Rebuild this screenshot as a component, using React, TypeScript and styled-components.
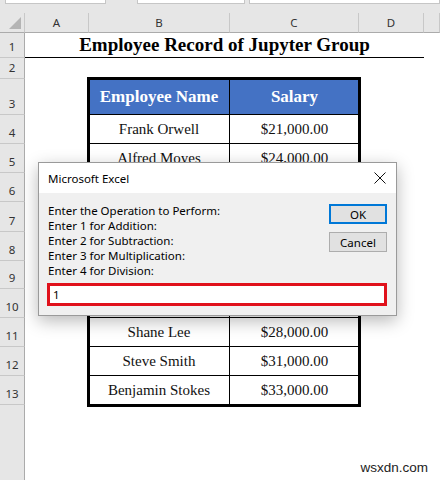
import React from "react";
import styled, { createGlobalStyle } from "styled-components";

const GlobalStyle = createGlobalStyle`
  html, body {
    margin: 0;
    padding: 0;
    background: #ffffff;
  }
  * {
    box-sizing: border-box;
  }
`;

const ROW_HEIGHTS = [25, 21, 36, 29, 29, 29, 30, 29, 28, 29, 29, 29, 29];
const COLUMNS = ["A", "B", "C", "D", ""];

// rows 6-10 sit under the dialog, so they are left blank
const EMPLOYEES = [
  { name: "Frank Orwell", salary: "$21,000.00" },
  { name: "Alfred Moyes", salary: "$24,000.00" },
  { name: "", salary: "" },
  { name: "", salary: "" },
  { name: "", salary: "" },
  { name: "", salary: "" },
  { name: "", salary: "" },
  { name: "Shane Lee", salary: "$28,000.00" },
  { name: "Steve Smith", salary: "$31,000.00" },
  { name: "Benjamin Stokes", salary: "$33,000.00" },
];

const Screen = styled.div`
  position: relative;
  width: 440px;
  height: 480px;
  overflow: hidden;
  background: #ffffff;
  display: flex;
  flex-direction: column;
`;

const FormulaStrip = styled.div`
  height: 13px;
  flex: none;
  background: #e6e6e6;
  display: flex;
  align-items: flex-start;
`;

const FormulaBox = styled.div<{ $left: number; $width: number }>`
  margin-left: ${(p) => p.$left}px;
  width: ${(p) => p.$width}px;
  height: 4px;
  background: #ffffff;
  border: 1px solid #c6c6c6;
  border-top: none;
`;

const Sheet = styled.div`
  flex: 1;
  display: grid;
  grid-template-columns: 25px 64px 141px 129px 65px 1fr;
  grid-template-rows: 20px ${ROW_HEIGHTS.map((h) => `${h}px`).join(" ")} 1fr;
`;

const Corner = styled.div`
  grid-row: 1;
  grid-column: 1;
  background: #e6e6e6;
  border-right: 1px solid #c8c8c8;
  border-bottom: 1px solid #ababab;
  display: flex;
  align-items: flex-end;
  justify-content: flex-end;
  padding: 0 3px 3px 0;
`;

const ColumnHeader = styled.div<{ $col: number }>`
  grid-row: 1;
  grid-column: ${(p) => p.$col};
  background: #e6e6e6;
  border-right: 1px solid #c8c8c8;
  border-bottom: 1px solid #ababab;
  display: flex;
  align-items: center;
  justify-content: center;
  font-family: "Noto Sans", "Open Sans", sans-serif;
  font-size: 11.5px;
  color: #333333;
`;

const RowHeader = styled.div<{ $row: number }>`
  grid-row: ${(p) => p.$row};
  grid-column: 1;
  background: #e6e6e6;
  border-right: 1px solid #ababab;
  border-bottom: 1px solid #c8c8c8;
  display: flex;
  align-items: flex-end;
  justify-content: center;
  padding-bottom: 3px;
  font-family: "Noto Sans", "Open Sans", sans-serif;
  font-size: 11.5px;
  line-height: 14px;
  color: #333333;
`;

const FillerHeader = styled.div<{ $row: number }>`
  grid-row: ${(p) => p.$row};
  grid-column: 1;
  background: #e6e6e6;
  border-right: 1px solid #ababab;
`;

const Title = styled.div`
  grid-row: 2;
  grid-column: 2 / 6;
  border-bottom: 1.5px solid #000000;
  display: flex;
  align-items: flex-end;
  justify-content: center;
  padding-bottom: 1px;
  font-family: "Liberation Serif", "Times New Roman", serif;
  font-weight: bold;
  font-size: 19px;
  line-height: 22px;
  color: #000000;
`;

const Table = styled.div`
  grid-row: 4 / ${4 + ROW_HEIGHTS.length - 2};
  grid-column: 3 / 5;
  display: grid;
  grid-template-columns: 141px 129px;
  grid-template-rows: ${ROW_HEIGHTS.slice(2).map((h) => `${h}px`).join(" ")};
  outline: 3px solid #000000;
  outline-offset: -1px;
`;

const HeadCell = styled.div`
  background: #4472c4;
  color: #ffffff;
  display: flex;
  align-items: center;
  justify-content: center;
  font-family: "Liberation Serif", "Times New Roman", serif;
  font-weight: bold;
  font-size: 17px;
  border-bottom: 1px solid #000000;
  &:first-child {
    border-right: 1px solid #000000;
  }
`;

const Cell = styled.div<{ $first: boolean }>`
  display: flex;
  align-items: center;
  justify-content: center;
  font-family: "Liberation Serif", "Times New Roman", serif;
  font-size: 15px;
  color: #111111;
  border-bottom: 1px solid #000000;
  border-right: ${(p) => (p.$first ? "1px solid #000000" : "none")};
`;

const Dialog = styled.div`
  position: absolute;
  left: 38px;
  top: 162px;
  width: 359px;
  height: 154px;
  border: 1px solid #9a9a9a;
  background: #f0f0f0;
  box-shadow: 0 5px 16px rgba(0, 0, 0, 0.28);
  display: flex;
  flex-direction: column;
  font-family: "Noto Sans", "Open Sans", sans-serif;
  color: #000000;
`;

const TitleBar = styled.div`
  height: 30px;
  flex: none;
  background: #ffffff;
  display: flex;
  align-items: center;
  justify-content: space-between;
  padding: 0 9px 0 9px;
  font-size: 11.5px;
`;

const CloseButton = styled.div`
  width: 14px;
  height: 14px;
  display: flex;
  align-items: center;
  justify-content: center;
`;

const Body = styled.div`
  flex: 1;
  display: flex;
  flex-direction: column;
  padding: 10px 9px 8px 7px;
`;

const TopRow = styled.div`
  display: flex;
  justify-content: space-between;
`;

const Prompt = styled.div`
  padding-left: 2px;
  font-size: 11.5px;
  line-height: 15px;
  white-space: pre;
`;

const ButtonStack = styled.div`
  display: flex;
  flex-direction: column;
  gap: 8px;
  padding-top: 1px;
`;

const DialogButton = styled.div<{ $default?: boolean }>`
  width: 58px;
  height: 20px;
  display: flex;
  align-items: center;
  justify-content: center;
  background: #e1e1e1;
  border: ${(p) => (p.$default ? "2px solid #0078d7" : "1px solid #adadad")};
  font-size: 11.5px;
`;

const InputBox = styled.div`
  margin-top: 5px;
  margin-left: 1px;
  height: 23px;
  background: #ffffff;
  border: 3px solid #e0111b;
  display: flex;
  align-items: center;
  padding-left: 3px;
  font-size: 11.5px;
`;

const Watermark = styled.div`
  position: absolute;
  right: 12px;
  bottom: 5px;
  font-family: "Liberation Sans", Arial, sans-serif;
  font-size: 13.5px;
  color: #222222;
`;

const App = () => {
  const lastRow = ROW_HEIGHTS.length + 2;
  return (
    <>
      <GlobalStyle />
      <Screen>
        <FormulaStrip>
          <FormulaBox $left={5} $width={101} />
          <FormulaBox $left={31} $width={109} />
          <FormulaBox $left={4} $width={192} />
        </FormulaStrip>
        <Sheet>
          <Corner>
            <svg width="12" height="12" viewBox="0 0 12 12">
              <polygon points="12,0 12,12 0,12" fill="#b4b4b4" />
            </svg>
          </Corner>
          {COLUMNS.map((c, i) => (
            <ColumnHeader key={i} $col={i + 2}>
              {c}
            </ColumnHeader>
          ))}
          {ROW_HEIGHTS.map((_, i) => (
            <RowHeader key={i} $row={i + 2}>
              {i + 1}
            </RowHeader>
          ))}
          <FillerHeader $row={lastRow} />
          <Title>Employee Record of Jupyter Group</Title>
          <Table>
            <HeadCell>Employee Name</HeadCell>
            <HeadCell>Salary</HeadCell>
            {EMPLOYEES.map((e, i) => (
              <React.Fragment key={i}>
                <Cell $first>{e.name}</Cell>
                <Cell $first={false}>{e.salary}</Cell>
              </React.Fragment>
            ))}
          </Table>
        </Sheet>

        <Dialog>
          <TitleBar>
            <span>Microsoft Excel</span>
            <CloseButton>
              <svg width="12" height="12" viewBox="0 0 12 12">
                <path d="M0.5 0.5 L11.5 11.5 M11.5 0.5 L0.5 11.5" stroke="#111" strokeWidth="1" fill="none" />
              </svg>
            </CloseButton>
          </TitleBar>
          <Body>
            <TopRow>
              <Prompt>
                {"Enter the Operation to Perform:\nEnter 1 for Addition:\nEnter 2 for Subtraction:\nEnter 3 for Multiplication:\nEnter 4 for Division:"}
              </Prompt>
              <ButtonStack>
                <DialogButton $default>OK</DialogButton>
                <DialogButton>Cancel</DialogButton>
              </ButtonStack>
            </TopRow>
            <InputBox>1</InputBox>
          </Body>
        </Dialog>

        <Watermark>wsxdn.com</Watermark>
      </Screen>
    </>
  );
};

export default App;
